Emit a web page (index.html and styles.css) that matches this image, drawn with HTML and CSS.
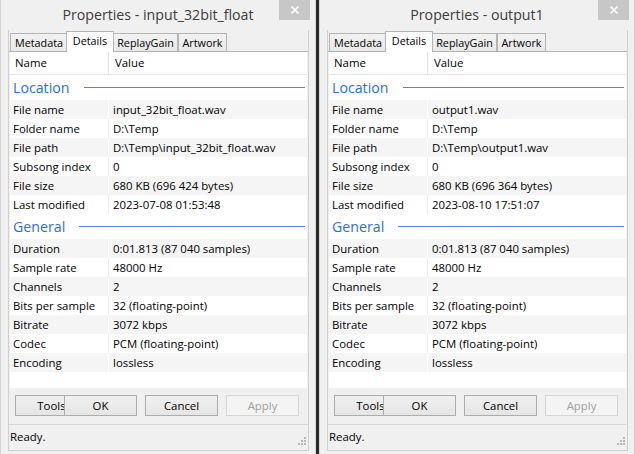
FILE: index.html
```html
<!DOCTYPE html>
<html>
<head>
  <title>Properties</title>
  <link rel="stylesheet" href="styles.css">
</head>
<body>
  <div class="desk">

    <div class="window">
      <div class="titlebar">
        <span class="title">Properties - input_32bit_float</span>
        <div class="close">
          <svg width="10" height="10" viewBox="0 0 10 10"><path d="M1.5 1.5L8.5 8.5M8.5 1.5L1.5 8.5" stroke="#fff" stroke-width="1.7"/></svg>
        </div>
      </div>
      <div class="client">
        <div class="tabs">
          <div class="tab t-meta">Metadata</div>
          <div class="tab t-det on">Details</div>
          <div class="tab t-rg">ReplayGain</div>
          <div class="tab t-art">Artwork</div>
        </div>
        <div class="page">
          <div class="list">
            <div class="head"><div class="c1">Name</div><div class="c2">Value</div></div>
            <div class="group"><span>Location</span><span class="rule"></span></div>
            <div class="row alt"><div class="c1">File name</div><div class="c2">input_32bit_float.wav</div></div>
            <div class="row"><div class="c1">Folder name</div><div class="c2">D:\Temp</div></div>
            <div class="row alt"><div class="c1">File path</div><div class="c2">D:\Temp\input_32bit_float.wav</div></div>
            <div class="row"><div class="c1">Subsong index</div><div class="c2">0</div></div>
            <div class="row alt"><div class="c1">File size</div><div class="c2">680 KB (696 424 bytes)</div></div>
            <div class="row"><div class="c1">Last modified</div><div class="c2">2023-07-08 01:53:48</div></div>
            <div class="group"><span>General</span><span class="rule"></span></div>
            <div class="row alt"><div class="c1">Duration</div><div class="c2">0:01.813 (87 040 samples)</div></div>
            <div class="row"><div class="c1">Sample rate</div><div class="c2">48000 Hz</div></div>
            <div class="row alt"><div class="c1">Channels</div><div class="c2">2</div></div>
            <div class="row"><div class="c1">Bits per sample</div><div class="c2">32 (floating-point)</div></div>
            <div class="row alt"><div class="c1">Bitrate</div><div class="c2">3072 kbps</div></div>
            <div class="row"><div class="c1">Codec</div><div class="c2">PCM (floating-point)</div></div>
            <div class="row alt"><div class="c1">Encoding</div><div class="c2">lossless</div></div>
          </div>
          <div class="buttons">
            <button class="btn b-tools">Tools</button>
            <button class="btn b-ok">OK</button>
            <button class="btn b-gap">Cancel</button>
            <button class="btn b-gap" disabled>Apply</button>
          </div>
        </div>
        <div class="status">
          <span>Ready.</span>
          <svg class="grip" width="8" height="8" viewBox="0 0 8 8"><path d="M6 0h2v2h-2zM3 3h2v2h-2zM6 3h2v2h-2zM0 6h2v2h-2zM3 6h2v2h-2zM6 6h2v2h-2z" fill="#b9b9b9"/></svg>
        </div>
      </div>
    </div>

    <div class="window">
      <div class="titlebar">
        <span class="title">Properties - output1</span>
        <div class="close">
          <svg width="10" height="10" viewBox="0 0 10 10"><path d="M1.5 1.5L8.5 8.5M8.5 1.5L1.5 8.5" stroke="#fff" stroke-width="1.7"/></svg>
        </div>
      </div>
      <div class="client">
        <div class="tabs">
          <div class="tab t-meta">Metadata</div>
          <div class="tab t-det on">Details</div>
          <div class="tab t-rg">ReplayGain</div>
          <div class="tab t-art">Artwork</div>
        </div>
        <div class="page">
          <div class="list">
            <div class="head"><div class="c1">Name</div><div class="c2">Value</div></div>
            <div class="group"><span>Location</span><span class="rule"></span></div>
            <div class="row alt"><div class="c1">File name</div><div class="c2">output1.wav</div></div>
            <div class="row"><div class="c1">Folder name</div><div class="c2">D:\Temp</div></div>
            <div class="row alt"><div class="c1">File path</div><div class="c2">D:\Temp\output1.wav</div></div>
            <div class="row"><div class="c1">Subsong index</div><div class="c2">0</div></div>
            <div class="row alt"><div class="c1">File size</div><div class="c2">680 KB (696 364 bytes)</div></div>
            <div class="row"><div class="c1">Last modified</div><div class="c2">2023-08-10 17:51:07</div></div>
            <div class="group"><span>General</span><span class="rule"></span></div>
            <div class="row alt"><div class="c1">Duration</div><div class="c2">0:01.813 (87 040 samples)</div></div>
            <div class="row"><div class="c1">Sample rate</div><div class="c2">48000 Hz</div></div>
            <div class="row alt"><div class="c1">Channels</div><div class="c2">2</div></div>
            <div class="row"><div class="c1">Bits per sample</div><div class="c2">32 (floating-point)</div></div>
            <div class="row alt"><div class="c1">Bitrate</div><div class="c2">3072 kbps</div></div>
            <div class="row"><div class="c1">Codec</div><div class="c2">PCM (floating-point)</div></div>
            <div class="row alt"><div class="c1">Encoding</div><div class="c2">lossless</div></div>
          </div>
          <div class="buttons">
            <button class="btn b-tools">Tools</button>
            <button class="btn b-ok">OK</button>
            <button class="btn b-gap">Cancel</button>
            <button class="btn b-gap" disabled>Apply</button>
          </div>
        </div>
        <div class="status">
          <span>Ready.</span>
          <svg class="grip" width="8" height="8" viewBox="0 0 8 8"><path d="M6 0h2v2h-2zM3 3h2v2h-2zM6 3h2v2h-2zM0 6h2v2h-2zM3 6h2v2h-2zM6 6h2v2h-2z" fill="#b9b9b9"/></svg>
        </div>
      </div>
    </div>

  </div>
</body>
</html>
```

FILE: styles.css
```css
body {
  margin: 0;
  background: #2a2a2a;
  font-family: "Open Sans", "Noto Sans", sans-serif;
  font-size: 11.4px;
  color: #000;
}
.desk {
  display: flex;
  gap: 3px;
}
.window {
  width: 316px;
  height: 454px;
  box-sizing: border-box;
  background: #f0f0f0;
  border-left: 1px solid #d4d4d4;
  border-right: 1px solid #d4d4d4;
}
.titlebar {
  display: grid;
  grid-template-columns: 37px 1fr 37px;
  height: 30px;
}
.title {
  grid-column: 2;
  text-align: center;
  font-size: 14.2px;
  line-height: 30px;
  color: #3c3c3c;
  white-space: nowrap;
}
.close {
  width: 31px;
  height: 20px;
  margin-left: 1px;
  background: #c7c7c7;
  display: flex;
  align-items: center;
  justify-content: center;
}
.client {
  margin-left: 7px;
  width: 301px;
  height: 421px;
  box-sizing: border-box;
  border: 1px solid #d0d0d0;
  border-top: none;
  display: flex;
  flex-direction: column;
}
.tabs {
  display: flex;
  align-items: flex-end;
  height: 21px;
  padding-left: 1px;
  font-size: 10.8px;
}
.tab {
  height: 18px;
  box-sizing: border-box;
  border: 1px solid #b4b4b4;
  border-bottom: none;
  background: linear-gradient(#f2f2f2, #e9e9e9);
  text-align: center;
  line-height: 17px;
}
.tab.on {
  height: 21px;
  margin-bottom: -1px;
  background: #fff;
  position: relative;
  z-index: 1;
  line-height: 18px;
}
.t-meta { width: 58px; }
.t-det { width: 48px; margin-left: -2px; }
.t-rg { width: 65px; margin-left: -1px; }
.t-art { width: 49px; }
.page {
  flex: 1;
  border-top: 1px solid #b4b4b4;
  display: flex;
  flex-direction: column;
}
.list {
  margin: 0 1px;
  height: 336px;
  background: #fff;
}
.head {
  display: flex;
  height: 22px;
  line-height: 22px;
  border-bottom: 1px solid #e5e5e5;
}
.head .c1 {
  width: 99px;
  box-sizing: border-box;
  padding-left: 5px;
  border-right: 1px solid #e5e5e5;
}
.head .c2 {
  padding-left: 6px;
}
.group {
  height: 25px;
  display: flex;
  align-items: center;
  gap: 14px;
  padding: 0 2px 0 3px;
  color: #2d6fd2;
  font-size: 14.2px;
}
.rule {
  flex: 1;
  height: 1px;
  background: #4a88dc;
}
.row {
  display: flex;
  height: 19px;
  line-height: 19px;
  white-space: nowrap;
}
.row.alt {
  background: #f5f5f5;
}
.row .c1 {
  width: 99px;
  box-sizing: border-box;
  padding-left: 3px;
  border-right: 1px solid #ececec;
}
.row.alt .c1 {
  border-right-color: #fff;
}
.row .c2 {
  padding-left: 4px;
}
.buttons {
  display: flex;
  margin-top: 7px;
  padding-left: 6px;
}
.btn {
  width: 73px;
  height: 21px;
  box-sizing: border-box;
  padding: 0;
  border: 1px solid #acacac;
  background: linear-gradient(#f0f0f0, #e5e5e5);
  font: inherit;
  color: #000;
}
.btn:disabled {
  border-color: #d5d5d5;
  background: #f4f4f4;
  color: #a0a0a0;
}
.b-ok { margin-left: -24px; }
.b-gap { margin-left: 8px; }
.status {
  height: 26px;
  box-sizing: border-box;
  padding: 0 2px 2px 1px;
  border-top: 1px solid #d7d7d7;
  display: flex;
  align-items: center;
  justify-content: space-between;
}
.status span {
  margin-top: -1px;
}
.grip {
  align-self: flex-end;
  margin-bottom: 3px;
}
```
